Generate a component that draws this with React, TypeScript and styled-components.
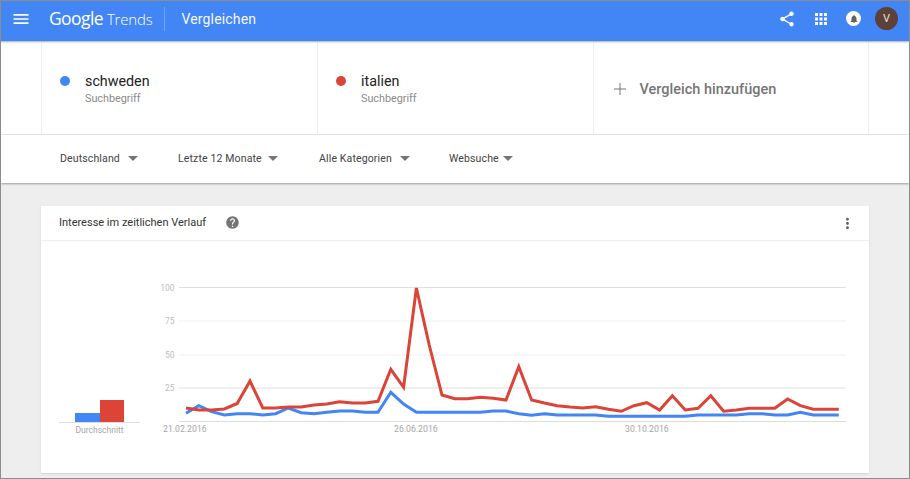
import React from 'react';
import styled, { createGlobalStyle } from 'styled-components';
import { MdApps, MdHelp, MdMenu, MdMoreVert, MdNotifications, MdShare } from 'react-icons/md';

const Global = createGlobalStyle`
  html, body { margin: 0; padding: 0; height: 100%; overflow: hidden; }
  body { font-family: Roboto, "Liberation Sans", sans-serif; background: #eee; }
`;

const Frame = styled.div`
  width: 910px; height: 479px; box-sizing: border-box;
  border: 1px solid #8c8c8c;
  display: flex; flex-direction: column; background: #eee; overflow: hidden;
`;
const TopBar = styled.header`
  height: 41px; box-sizing: border-box; flex: none; background: #4285f4; color: #fff;
  border-bottom: 1px solid #c2c2c2; padding-bottom: 5px;
  display: flex; align-items: center; box-shadow: 0 1px 1px rgba(0,0,0,.1);
  position: relative; z-index: 2;
`;
const MenuButton = styled.div`
  width: 48px; padding-left: 10px; box-sizing: border-box; display: flex; font-size: 20px;
`;
const Logo = styled.div`
  font-family: "Open Sans", sans-serif; font-size: 17.5px; letter-spacing: -0.6px; width: 114.5px; flex: none; white-space: nowrap; margin-top: -2px;
  span { font-weight: 300; font-size: 15px; letter-spacing: -0.2px; margin-left: 4px; }
`;
const Divider = styled.div`
  width: 1px; height: 24px; background: rgba(255,255,255,.25); flex: none;
`;
const PageTitle = styled.div`
  font-size: 14px; letter-spacing: .15px; margin-left: 17px; flex: 1; opacity: .95;
`;
const Actions = styled.div`
  display: flex; align-items: center; margin-right: 11px;
`;
const ActionIcon = styled.div<{ $gap: number }>`
  display: flex; font-size: 18px; margin-right: ${p => p.$gap}px;
`;
const BellBadge = styled.div`
  width: 15px; height: 15px; border-radius: 50%; background: #fff; color: #616161;
  display: flex; align-items: center; justify-content: center; font-size: 10px; margin-right: 14px;
`;
const Avatar = styled.div`
  width: 23px; height: 23px; border-radius: 50%; background: #5d4037; color: #e8e0dc;
  display: flex; align-items: center; justify-content: center; font-size: 11px;
`;
const Terms = styled.section`
  flex: none; height: 93px; box-sizing: border-box; background: #fff; border-bottom: 1px solid #e8e8e8; padding-left: 40px;
  display: flex; position: relative; z-index: 1;
`;
const TermCell = styled.div`
  width: 276px; box-sizing: border-box; border-left: 1px solid #eee; display: flex; align-items: flex-start;
  &:last-child { border-right: 1px solid #eee; }
`;
const Dot = styled.div<{ $color: string }>`
  width: 10px; height: 10px; border-radius: 50%; background: ${p => p.$color}; margin: 34px 0 0 17.5px; flex: none;
`;
const TermText = styled.div`
  margin: 30px 0 0 15.5px;
`;
const TermName = styled.div`
  font-size: 14.3px; line-height: 19px; color: #212121;
`;
const TermKind = styled.div`
  font-size: 10.8px; line-height: 14px; margin-top: 1px; color: #8a8a8a;
`;
const AddCompare = styled.div`
  display: flex; align-items: center; height: 100%; padding: 2px 0 0 19.5px; box-sizing: border-box; color: #757575;
  font-size: 14.5px; font-weight: 500;
`;
const PlusIcon = styled.svg`
  width: 12px; height: 12px; margin-right: 14px; flex: none; margin-top: -1px;
`;
const AddLabel = styled.span`
  margin-top: 1px;
`;
const Filters = styled.nav`
  flex: none; height: 48px; box-sizing: border-box; background: #fff; display: flex; align-items: center; padding-left: 59px;
  box-shadow: 0 1px 2px rgba(0,0,0,.35); position: relative; z-index: 1;
`;
const Filter = styled.div<{ $width: number }>`
  width: ${p => p.$width}px; flex: none; display: flex; align-items: center;
  font-size: 10.5px; color: #424242; margin-top: -1px; letter-spacing: .14px;
`;
const Caret = styled.i<{ $gap: number }>`
  width: 0; height: 0; border: 5px solid transparent; border-top: 5px solid #757575; border-bottom: 0;
  margin-left: ${p => p.$gap}px; margin-top: -1px;
`;
const Content = styled.main`
  flex: 1; padding: 23px 40px 0; min-height: 0;
`;
const Card = styled.section`
  height: 267px; background: #fff; box-shadow: 0 1px 2px rgba(0,0,0,.12); display: flex; flex-direction: column;
`;
const CardHeader = styled.div`
  height: 35px; box-sizing: border-box; flex: none; border-bottom: 1px solid #eee; display: flex; align-items: center; padding-left: 18px;
`;
const CardTitle = styled.div`
  font-size: 11px; color: #333; margin-top: -1px;
`;
const HelpIcon = styled.div`
  display: flex; font-size: 15px; color: #757575; margin-left: 19px; margin-top: -1px;
`;
const MoreIcon = styled.div`
  display: flex; font-size: 17px; color: #616161; margin-left: auto; margin-right: 13px;
`;
const CardBody = styled.div`
  flex: 1; display: flex;
`;
const AverageColumn = styled.div`
  width: 81px; margin-left: 18px; flex: none; padding-top: 159px;
`;
const Bars = styled.div`
  display: flex; align-items: flex-end; justify-content: center; border-bottom: 1px solid #ddd;
`;
const Bar = styled.div<{ $color: string; $height: number }>`
  width: 24.5px; height: ${p => p.$height}px; background: ${p => p.$color};
`;
const AverageLabel = styled.div`
  font-size: 8.5px; line-height: 11px; margin-top: 2px; color: #a6a6a6; text-align: center;
`;
const ChartSvg = styled.svg`
  width: 700px; height: 205px; flex: none; margin-left: 15px; display: block;
`;

const red = [408, 410, 410, 409, 403.5, 381, 408, 408, 407, 407, 405, 404, 401.7, 403, 403, 401.3, 369.3, 387.3, 288, 345, 395, 398.7, 398.7, 397.3, 398.3, 400, 366.7, 400, 403, 405.7, 407, 408, 406.7, 409.3, 411.3, 405.7, 402.7, 410, 395.7, 410, 408.3, 395.7, 411.3, 410, 408.3, 408.3, 408.3, 399, 405.7, 409.3, 409.3, 409.3];
const blue = [413.3, 405.7, 411.7, 415, 413.7, 413.7, 415, 413.7, 408, 412.7, 413.7, 412.3, 411, 411, 412.3, 412.3, 392.3, 404, 412.3, 412.3, 412.3, 412.3, 412.3, 412.3, 411, 411, 413.7, 415.3, 413.7, 415, 415, 415, 415, 416.3, 416.3, 416.3, 416.3, 416.3, 416.3, 416.3, 415, 415, 415, 415, 413.7, 413.7, 415, 415, 412.3, 415, 415, 415];

// page coordinates -> chart coordinates (svg begins at x=155, y=241)
const OX = 155;
const OY = 241;
const toPoints = (ys: number[]) =>
  ys.map((y, i) => `${(186 + 12.8 * i - OX).toFixed(1)},${(y - OY).toFixed(1)}`).join(' ');

const gridLines = [
  { y: 287.5, label: '100', c: '#e0e0e0' },
  { y: 321, label: '75', c: '#f0f0f0' },
  { y: 355, label: '50', c: '#f0f0f0' },
  { y: 388, label: '25', c: '#e0e0e0' },
];
const dates = [
  { x: 163, label: '21.02.2016' },
  { x: 394, label: '26.06.2016' },
  { x: 625, label: '30.10.2016' },
];

const AxisText = styled.text`
  font-family: Roboto, sans-serif; font-size: 8.5px; fill: #bdbdbd;
`;
const DateText = styled.text`
  font-family: Roboto, sans-serif; font-size: 8.7px; fill: #a6a6a6;
`;

export default function App() {
  return (
    <>
      <Global />
      <Frame>
        <TopBar>
          <MenuButton><MdMenu /></MenuButton>
          <Logo>Google<span>Trends</span></Logo>
          <Divider />
          <PageTitle>Vergleichen</PageTitle>
          <Actions>
            <ActionIcon $gap={16}><MdShare /></ActionIcon>
            <ActionIcon $gap={16}><MdApps /></ActionIcon>
            <BellBadge><MdNotifications /></BellBadge>
            <Avatar>V</Avatar>
          </Actions>
        </TopBar>
        <Terms>
          <TermCell>
            <Dot $color="#4285f4" />
            <TermText><TermName>schweden</TermName><TermKind>Suchbegriff</TermKind></TermText>
          </TermCell>
          <TermCell>
            <Dot $color="#db4437" />
            <TermText><TermName>italien</TermName><TermKind>Suchbegriff</TermKind></TermText>
          </TermCell>
          <TermCell>
            <AddCompare>
              <PlusIcon viewBox="0 0 12 12"><path d="M6 0v12M0 6h12" stroke="#757575" strokeWidth="1" fill="none" /></PlusIcon>
              <AddLabel>Vergleich hinzufügen</AddLabel>
            </AddCompare>
          </TermCell>
        </Terms>
        <Filters>
          <Filter $width={118}>Deutschland<Caret $gap={8} /></Filter>
          <Filter $width={141}>Letzte 12 Monate<Caret $gap={6} /></Filter>
          <Filter $width={130}>Alle Kategorien<Caret $gap={8} /></Filter>
          <Filter $width={90}>Websuche<Caret $gap={4} /></Filter>
        </Filters>
        <Content>
          <Card>
            <CardHeader>
              <CardTitle>Interesse im zeitlichen Verlauf</CardTitle>
              <HelpIcon><MdHelp /></HelpIcon>
              <MoreIcon><MdMoreVert /></MoreIcon>
            </CardHeader>
            <CardBody>
              <AverageColumn>
                <Bars>
                  <Bar $color="#4285f4" $height={9} />
                  <Bar $color="#db4437" $height={22} />
                </Bars>
                <AverageLabel>Durchschnitt</AverageLabel>
              </AverageColumn>
              <ChartSvg viewBox="0 0 700 205">
                {gridLines.map(g => (
                  <g key={g.label}>
                    <line x1={179 - OX} x2={846 - OX} y1={g.y - OY} y2={g.y - OY} stroke={g.c} strokeWidth="1" />
                    <AxisText x={174.5 - OX} y={g.y - OY + 3} textAnchor="end">{g.label}</AxisText>
                  </g>
                ))}
                <line x1={179 - OX} x2={846 - OX} y1={421.5 - OY} y2={421.5 - OY} stroke="#dcdcdc" strokeWidth="1" />
                {dates.map(d => (
                  <DateText key={d.label} x={d.x - OX} y={432 - OY}>{d.label}</DateText>
                ))}
                <polyline points={toPoints(blue)} fill="none" stroke="#4285f4" strokeWidth="3" strokeLinejoin="miter" />
                <polyline points={toPoints(red)} fill="none" stroke="#db4437" strokeWidth="3" strokeLinejoin="miter" />
              </ChartSvg>
            </CardBody>
          </Card>
        </Content>
      </Frame>
    </>
  );
}
